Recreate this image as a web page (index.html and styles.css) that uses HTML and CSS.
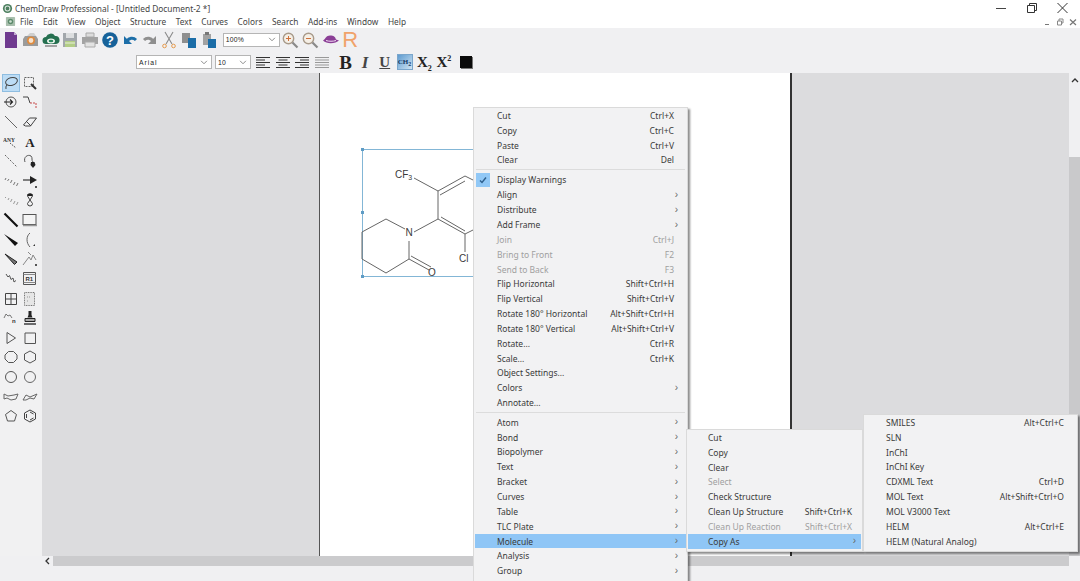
FILE: index.html
```html
<!DOCTYPE html>
<html lang="en">
<head>
<meta charset="utf-8">
<title>ChemDraw Professional</title>
<link rel="stylesheet" href="styles.css">
</head>
<body>
<div class="app">
  <header class="titlebar">
    <svg class="appicon" viewBox="0 0 12 12"><circle cx="6" cy="6" r="5" fill="#4d7f5f"/><circle cx="6" cy="6" r="2.600" fill="none" stroke="#dfe9e2" stroke-width="1.100"/></svg>
    <span class="title">ChemDraw Professional - [Untitled Document-2 *]</span>
    <div class="winbtns">
      <svg class="wb" viewBox="0 0 30 14"><path d="M10 7.500h10" stroke="#444"/></svg>
      <svg class="wb" viewBox="0 0 30 14"><path d="M10.500 4.500h7v7h-7zM12.500 4.500v-2h7v7h-2" fill="none" stroke="#333"/></svg>
      <svg class="wb" viewBox="0 0 30 14"><path d="M9.500 2l10 10M19.500 2l-10 10" stroke="#333"/></svg>
    </div>
  </header>
  <nav class="menubar">
    <svg class="docicon" viewBox="0 0 12 12"><rect x="1" y="1" width="10" height="10" rx="1" fill="#a9bfae"/><circle cx="6" cy="6" r="3" fill="#5c8a6b"/><circle cx="6" cy="6" r="1.400" fill="#cfe0d3"/></svg>
    <span class="mi">File</span><span class="mi">Edit</span><span class="mi">View</span><span class="mi">Object</span><span class="mi">Structure</span><span class="mi">Text</span><span class="mi">Curves</span><span class="mi">Colors</span><span class="mi">Search</span><span class="mi">Add-ins</span><span class="mi">Window</span><span class="mi">Help</span>
    <div class="mdibtns">
      <svg class="mb" viewBox="0 0 10 10"><path d="M3 7.500h4" stroke="#777"/></svg>
      <svg class="mb" viewBox="0 0 10 10"><path d="M2.500 4h4v4h-4zM4 4V2h4v4H6.500" fill="none" stroke="#888"/></svg>
      <svg class="mb" viewBox="0 0 10 10"><path d="M2 2.500l6 5.500M8 2.500L2 8" stroke="#777" stroke-width="1.200"/></svg>
    </div>
  </nav>
  <section class="toolbars">
    <div class="tb-row">
      <svg class="tb" viewBox="0 0 18 18"><path d="M3 1h9l3 3v13H3z" fill="#6f3a8f"/><path d="M12 1l3 3h-3z" fill="#c3abd1"/></svg>
      <svg class="tb" viewBox="0 0 18 18"><path d="M1 8l2-3h11l2 3v7H1z" fill="#9b9b9b"/><path d="M5 5l3-3h4l2 3z" fill="#cfcfcf"/><circle cx="9" cy="9.500" r="3.200" fill="#f6e3cf" stroke="#e08a3c" stroke-width="1.600"/></svg>
      <svg class="tb" viewBox="0 0 18 18"><path d="M4 13a3.500 3.500 0 0 1 0-7 5 5 0 0 1 9-1 4 4 0 0 1 1 8z" fill="#256f50"/><ellipse cx="9" cy="10" rx="4" ry="2.500" fill="#eef5f0"/><ellipse cx="9" cy="10" rx="2.400" ry="1.300" fill="#2c8a5f"/><path d="M3 15h12" stroke="#888" stroke-width="1.500"/></svg>
      <svg class="tb" viewBox="0 0 18 18"><path d="M2 2h14v14H2z" fill="#a2a7ab"/><path d="M5 2h8v5H5z" fill="#dcdedf"/><path d="M4 10h10v6H4z" fill="#b2cd86"/><path d="M4 12h10" stroke="#e8efd9"/></svg>
      <svg class="tb" viewBox="0 0 18 18"><path d="M5 2h8v4H5z" fill="#ddd" stroke="#aaa"/><path d="M1 6h16v7H1z" fill="#a3a3a3"/><path d="M4 11h10v5H4z" fill="#e2e2e2" stroke="#aaa"/></svg>
      <svg class="tb" viewBox="0 0 18 18"><circle cx="9" cy="9" r="7.800" fill="#17629a"/><text x="9" y="13.500" class="qmark">?</text></svg>
      <svg class="tb" viewBox="0 0 18 18"><path d="M3 5v8h8z" fill="#1c6ea8"/><path d="M6 10c2-3 6-4 9-1" fill="none" stroke="#1c6ea8" stroke-width="3"/></svg>
      <svg class="tb" viewBox="0 0 18 18"><path d="M15 5v8H7z" fill="#8f8f8f"/><path d="M12 10c-2-3-6-4-9-1" fill="none" stroke="#8f8f8f" stroke-width="3"/></svg>
      <svg class="tb" viewBox="0 0 18 18"><path d="M5 1l7 12M13 1L6 13" stroke="#8b8b8b" stroke-width="1.100" fill="none"/><circle cx="4.500" cy="15" r="1.800" fill="none" stroke="#e59a4d"/><circle cx="13.500" cy="15" r="1.800" fill="none" stroke="#e59a4d"/></svg>
      <svg class="tb" viewBox="0 0 18 18"><path d="M2 2h8v10H2z" fill="#8f8f8f"/><path d="M8 7h8v10H8z" fill="#1c6ea8"/></svg>
      <svg class="tb" viewBox="0 0 18 18"><path d="M3 3h8v11H3z" fill="#a2a2a2"/><path d="M5 1h4v3H5z" fill="#777"/><path d="M8 8h8v9H8z" fill="#1c6ea8"/></svg>
      <div class="combo zoomcombo"><span>100%</span><svg class="caret" viewBox="0 0 9 6"><path d="M1 1l3.500 3.500L8 1" fill="none" stroke="#777"/></svg></div>
      <svg class="tb" viewBox="0 0 18 18"><circle cx="7.500" cy="7.500" r="5.200" fill="#f5efe6" stroke="#a89a8a" stroke-width="1.400"/><path d="M11.500 11.500l5 5" stroke="#8a8a8a" stroke-width="2.200"/><path d="M5 7.500h5M7.500 5v5" stroke="#d0703a"/></svg>
      <svg class="tb" viewBox="0 0 18 18"><circle cx="7.500" cy="7.500" r="5.200" fill="#f5efe6" stroke="#a89a8a" stroke-width="1.400"/><path d="M11.500 11.500l5 5" stroke="#8a8a8a" stroke-width="2.200"/><path d="M5 7.500h5" stroke="#d0703a"/></svg>
      <svg class="tb hat" viewBox="0 0 18 18"><path d="M1 9.500c3-2 3-5 7-5s5 1 6 4l3 1c-3 3-12 4-16 0z" fill="#8b3f96"/><path d="M4 9.500c3 1 7 1 10 0" stroke="#efd9f2" fill="none"/></svg>
      <span class="rlogo">R</span>
    </div>
    <div class="tb-row row2">
      <div class="combo fontcombo"><span>Arial</span><svg class="caret" viewBox="0 0 9 6"><path d="M1 1l3.500 3.500L8 1" fill="none" stroke="#777"/></svg></div>
      <div class="combo sizecombo"><span>10</span><svg class="caret" viewBox="0 0 9 6"><path d="M1 1l3.500 3.500L8 1" fill="none" stroke="#777"/></svg></div>
      <svg class="tb al" viewBox="0 0 16 14"><path d="M1 2.500h14M1 5h9M1 7.500h14M1 10h9M1 12.500h14" stroke="#333"/></svg>
      <svg class="tb al" viewBox="0 0 16 14"><path d="M1 2.500h14M3.500 5h9M1 7.500h14M3.500 10h9M1 12.500h14" stroke="#333"/></svg>
      <svg class="tb al" viewBox="0 0 16 14"><path d="M1 2.500h14M6 5h9M1 7.500h14M6 10h9M1 12.500h14" stroke="#333"/></svg>
      <svg class="tb al" viewBox="0 0 16 14"><path d="M1 2.500h14M1 5h14M1 7.500h14M1 10h14M1 12.500h14" stroke="#999"/></svg>
      <span class="fmt bold">B</span>
      <span class="fmt ital">I</span>
      <span class="fmt under">U</span>
      <span class="fmt chem"><span>CH<sub>2</sub></span></span>
      <span class="fmt sx"><span>X<sub>2</sub></span></span>
      <span class="fmt sx"><span>X<sup>2</sup></span></span>
      <span class="swatch"></span>
    </div>
  </section>
  <main class="workspace">
    <aside class="palette">
      <svg class="ic sel" viewBox="0 0 16 16"><ellipse cx="8.500" cy="6.500" rx="6" ry="3.800" transform="rotate(-15 8.500 6.500)" fill="none" stroke="#444"/><path d="M4 10c-1.500 1-1 3-1 4" fill="none" stroke="#444"/></svg>
      <svg class="ic" viewBox="0 0 16 16"><path d="M2.500 2.500h9v9h-9z" fill="none" stroke="#666" stroke-dasharray="2 1"/><path d="M9 9l5 5" stroke="#333" stroke-width="2"/></svg>
      <svg class="ic" viewBox="0 0 16 16"><circle cx="8" cy="8" r="5" fill="none" stroke="#555"/><path d="M1 8h8M7 5.500L9.500 8 7 10.500" fill="none" stroke="#222" stroke-width="1.100"/></svg>
      <svg class="ic" viewBox="0 0 16 16"><path d="M1 3h5l2 6" fill="none" stroke="#444"/><path d="M8 9h6v5" fill="none" stroke="#c84a4a" stroke-dasharray="2 1"/></svg>
      <svg class="ic" viewBox="0 0 16 16"><path d="M2 2l12 12" stroke="#666"/></svg>
      <svg class="ic" viewBox="0 0 16 16"><path d="M1.500 11l6-7h7l-6 8h-5z" fill="none" stroke="#444"/><path d="M5 8l4 4" stroke="#444"/></svg>
      <svg class="ic" viewBox="0 0 16 16"><text x="0" y="8" class="anytxt">ANY</text><path d="M7 9l6 5" stroke="#555" stroke-dasharray="1.500 1"/></svg>
      <svg class="ic" viewBox="0 0 16 16"><text x="8" y="13" class="atxt">A</text></svg>
      <svg class="ic" viewBox="0 0 16 16"><path d="M2 2l12 12" stroke="#666" stroke-dasharray="2 1.500"/></svg>
      <svg class="ic" viewBox="0 0 16 16"><path d="M3 9c-2-5 3-8 6-6 2 2 0 4 2 6" fill="none" stroke="#555"/><path d="M9 9h3.500l1 3-2.500 3-2.500-3z" fill="#222"/></svg>
      <svg class="ic" viewBox="0 0 16 16"><path d="M3 5l-1 2M6 6L4.500 8M9 7l-1.500 3M12 9l-1.500 3M15 10l-1.500 3" stroke="#777"/></svg>
      <svg class="ic" viewBox="0 0 16 16"><path d="M1 7h8" stroke="#222" stroke-width="1.100"/><path d="M8 3l7 4-7 4z" fill="#222"/><path d="M13 13h2v2h-2z" fill="#555"/></svg>
      <svg class="ic" viewBox="0 0 16 16"><path d="M3 5l-1 1M6 6L5 8M9 7l-1.500 3M12 9l-1.500 3M15 10l-1.500 3" stroke="#999"/></svg>
      <svg class="ic" viewBox="0 0 16 16"><path d="M8 8L5.500 4a2.500 2.500 0 1 1 5 0zM8 8l-2.500 3.500a2.500 2.500 0 1 0 5 0z" fill="none" stroke="#444"/><path d="M5.500 3h5" stroke="#222" stroke-width="2"/></svg>
      <svg class="ic" viewBox="0 0 16 16"><path d="M1.500 1.500l13 13" stroke="#111" stroke-width="2.100"/></svg>
      <svg class="ic" viewBox="0 0 16 16"><rect x="1" y="2.500" width="13" height="10" fill="#f4f4f4" stroke="#555"/><path d="M1 13.500h14" stroke="#999" stroke-width="1.500"/></svg>
      <svg class="ic" viewBox="0 0 16 16"><path d="M1 2l14 9-3 3z" fill="#111"/></svg>
      <svg class="ic" viewBox="0 0 16 16"><path d="M8 1c-4 3-4 10 0 14" fill="none" stroke="#666"/><path d="M13 12v2h-2z" fill="#333"/></svg>
      <svg class="ic" viewBox="0 0 16 16"><path d="M2 3l12 8-2.500 2.500z" fill="#777" stroke="#222"/></svg>
      <svg class="ic" viewBox="0 0 16 16"><path d="M1 14L7 6l2 3 2-5 3 5" fill="none" stroke="#888"/><path d="M6 1l3 3" stroke="#888"/><path d="M13 13h2v2h-2z" fill="#555"/></svg>
      <svg class="ic" viewBox="0 0 16 16"><path d="M3 3l2 3 1.500-1.500 1.500 4 2-1.500 1 4 2-1.500" fill="none" stroke="#555"/></svg>
      <svg class="ic" viewBox="0 0 16 16"><path d="M1.500 1.500h12v12h-12z" fill="none" stroke="#555"/><path d="M1.500 3.500h12M1.500 11.500h12" stroke="#888"/><text x="3.500" y="9.500" class="rtxt">R1</text></svg>
      <svg class="ic" viewBox="0 0 16 16"><path d="M2.500 2.500h11v11h-11zM8 2.500v11M2.500 8h11" fill="none" stroke="#444"/></svg>
      <svg class="ic" viewBox="0 0 16 16"><path d="M2.500 1.500h10v13h-10z" fill="#e6e6e6" stroke="#777" stroke-dasharray="1 .7"/><path d="M5 6h4M5 10h2" stroke="#999" stroke-dasharray="1 1"/></svg>
      <svg class="ic" viewBox="0 0 16 16"><path d="M1 8l2-4 2 2 2-1 2 3" fill="none" stroke="#777"/><text x="9" y="13" class="rtxt">n</text></svg>
      <svg class="ic" viewBox="0 0 16 16"><path d="M6.500 1h3v4l1 2.500h-5l1-2.500z" fill="#222"/><path d="M3 8.500h10v3H3z" fill="#aaa" stroke="#222"/><path d="M2 14h12" stroke="#222" stroke-width="1.300"/></svg>
      <svg class="ic" viewBox="0 0 16 16"><path d="M4 2.500L12.500 8 4 13.500z" fill="none" stroke="#555"/></svg>
      <svg class="ic" viewBox="0 0 16 16"><path d="M3 3h10.500v10.500H3z" fill="none" stroke="#555"/></svg>
      <svg class="ic" viewBox="0 0 16 16"><path d="M5.500 2.500h5l3.500 3.500v4l-3.500 3.500h-5L2 10V6z" fill="none" stroke="#555"/></svg>
      <svg class="ic" viewBox="0 0 16 16"><path d="M8 2l5.500 3v6L8 14l-5.500-3V5z" fill="none" stroke="#555"/></svg>
      <svg class="ic" viewBox="0 0 16 16"><circle cx="8" cy="8" r="5.500" fill="none" stroke="#555"/></svg>
      <svg class="ic" viewBox="0 0 16 16"><circle cx="8" cy="8" r="5.500" fill="none" stroke="#666"/></svg>
      <svg class="ic" viewBox="0 0 16 16"><path d="M1 5l4 2 6-1 4-1-2 5-5 1-4-2-3 1z" fill="none" stroke="#666"/></svg>
      <svg class="ic" viewBox="0 0 16 16"><path d="M1 11l3-5 4 2 7-3-3 5-4-1-4 2z" fill="none" stroke="#666"/></svg>
      <svg class="ic" viewBox="0 0 16 16"><path d="M8 2.500l5.500 4-2 6.500h-7l-2-6.500z" fill="none" stroke="#555"/></svg>
      <svg class="ic" viewBox="0 0 16 16"><path d="M8 2l5.500 3v6L8 14l-5.500-3V5z" fill="none" stroke="#444"/><path d="M4.500 6v4M8 12l3.500-2M8 4l3.500 2" stroke="#444"/></svg>
    </aside>
    <div class="canvas">
      <div class="sheet">
        <svg class="molecule" viewBox="0 0 153 135" width="153" height="135">
          <rect x="41.500" y="3.500" width="130" height="127" fill="none" stroke="#83b6d6"/>
          <rect x="40" y="2" width="3" height="3" fill="#5f9cc5"/><rect x="40" y="65" width="3" height="3" fill="#5f9cc5"/><rect x="40" y="129" width="3" height="3" fill="#5f9cc5"/>
          <g fill="none" stroke="#666" stroke-width="1">
            <path d="M93 32l24 13M117 45l27-15M119 49l25-14M117 45v28M117 73l27 15M120 71l24 14M144 88v18M144 88l8-4M144 30l8 4M117 73l-24 13M84 83l-19-10M65 73l-24 13M41 86v27M41 113l24 14M65 127l23-14M88 113V95M88 113l20 11M90 110l20 11"/>
          </g>
          <text x="74" y="32" class="chemtxt">CF<tspan class="subs" dy="2">3</tspan></text>
          <text x="84.500" y="90" class="chemtxt">N</text>
          <text x="138" y="116" class="chemtxt">Cl</text>
          <text x="107" y="130" class="chemtxt">O</text>
        </svg>
      </div>
    </div>
    <div class="vscroll">
      <svg class="arrow" viewBox="0 0 8 6"><path d="M1 5l3-3 3 3" fill="none" stroke="#333" stroke-width="1.300"/></svg>
      <div class="vthumb"></div>
    </div>
  </main>
  <div class="hscroll">
    <div class="hgap"></div>
    <svg class="harrow" viewBox="0 0 6 8"><path d="M5 1L2 4l3 3" fill="none" stroke="#333" stroke-width="1.300"/></svg>
    <div class="hthumb"></div>
  </div>
  <footer class="status"></footer>

  <div class="menu menu-main">
    <div class="row"><span>Cut</span><span>Ctrl+X</span></div>
    <div class="row"><span>Copy</span><span>Ctrl+C</span></div>
    <div class="row"><span>Paste</span><span>Ctrl+V</span></div>
    <div class="row"><span>Clear</span><span>Del</span></div>
    <div class="sep"></div>
    <div class="row"><svg class="check" viewBox="0 0 14 14"><path d="M4 7.500l2 2 4-5" fill="none" stroke="#2d5f8c" stroke-width="1.400"/></svg><span>Display Warnings</span></div>
    <div class="row"><span>Align</span><i class="chev">›</i></div>
    <div class="row"><span>Distribute</span><i class="chev">›</i></div>
    <div class="row"><span>Add Frame</span><i class="chev">›</i></div>
    <div class="row off"><span>Join</span><span>Ctrl+J</span></div>
    <div class="row off"><span>Bring to Front</span><span>F2</span></div>
    <div class="row off"><span>Send to Back</span><span>F3</span></div>
    <div class="row"><span>Flip Horizontal</span><span>Shift+Ctrl+H</span></div>
    <div class="row"><span>Flip Vertical</span><span>Shift+Ctrl+V</span></div>
    <div class="row"><span>Rotate 180° Horizontal</span><span>Alt+Shift+Ctrl+H</span></div>
    <div class="row"><span>Rotate 180° Vertical</span><span>Alt+Shift+Ctrl+V</span></div>
    <div class="row"><span>Rotate...</span><span>Ctrl+R</span></div>
    <div class="row"><span>Scale...</span><span>Ctrl+K</span></div>
    <div class="row"><span>Object Settings...</span></div>
    <div class="row"><span>Colors</span><i class="chev">›</i></div>
    <div class="row"><span>Annotate...</span></div>
    <div class="sep sep2"></div>
    <div class="row"><span>Atom</span><i class="chev">›</i></div>
    <div class="row"><span>Bond</span><i class="chev">›</i></div>
    <div class="row"><span>Biopolymer</span><i class="chev">›</i></div>
    <div class="row"><span>Text</span><i class="chev">›</i></div>
    <div class="row"><span>Bracket</span><i class="chev">›</i></div>
    <div class="row"><span>Curves</span><i class="chev">›</i></div>
    <div class="row"><span>Table</span><i class="chev">›</i></div>
    <div class="row"><span>TLC Plate</span><i class="chev">›</i></div>
    <div class="row hot"><span>Molecule</span><i class="chev">›</i></div>
    <div class="row"><span>Analysis</span><i class="chev">›</i></div>
    <div class="row"><span>Group</span><i class="chev">›</i></div>
  </div>

  <div class="menu menu-sub">
    <div class="row"><span>Cut</span></div>
    <div class="row"><span>Copy</span></div>
    <div class="row"><span>Clear</span></div>
    <div class="row off"><span>Select</span></div>
    <div class="row"><span>Check Structure</span></div>
    <div class="row"><span>Clean Up Structure</span><span>Shift+Ctrl+K</span></div>
    <div class="row off"><span>Clean Up Reaction</span><span>Shift+Ctrl+X</span></div>
    <div class="row hot"><span>Copy As</span><i class="chev">›</i></div>
  </div>

  <div class="menu menu-copy">
    <div class="row"><span>SMILES</span><span>Alt+Ctrl+C</span></div>
    <div class="row"><span>SLN</span></div>
    <div class="row"><span>InChI</span></div>
    <div class="row"><span>InChI Key</span></div>
    <div class="row"><span>CDXML Text</span><span>Ctrl+D</span></div>
    <div class="row"><span>MOL Text</span><span>Alt+Shift+Ctrl+O</span></div>
    <div class="row"><span>MOL V3000 Text</span></div>
    <div class="row"><span>HELM</span><span>Alt+Ctrl+E</span></div>
    <div class="row"><span>HELM (Natural Analog)</span></div>
  </div>
</div>
</body>
</html>
```
FILE: styles.css
```css
* { box-sizing: border-box; }
html, body { margin: 0; padding: 0; height: 100%; background: #fff; overflow: hidden; }
.app {
  position: relative;
  width: 1080px;
  height: 581px;
  display: flex;
  flex-direction: column;
  overflow: hidden;
  font-family: "Noto Sans", "Liberation Sans", sans-serif;
  font-size: 8.5px;
  color: #3a3a3a;
}

.titlebar { height: 15px; display: flex; align-items: center; padding: 1px 0 0 2px; background: #fff; font-size: 8.350px; color: #444; }
.appicon { width: 11px; height: 11px; margin-right: 2px; }
.winbtns { margin-left: auto; display: flex; gap: 1px; padding-right: 2px; }
.wb { width: 30px; height: 14px; }

.menubar { height: 13px; display: flex; align-items: center; padding-left: 5px; background: #fff; color: #444; font-size: 8.300px; }
.docicon { width: 11px; height: 11px; margin-right: 4px; }
.mi { margin-right: 9.600px; white-space: nowrap; }
.mdibtns { margin-left: auto; display: flex; gap: 3px; padding-right: 2px; }
.mb { width: 10px; height: 10px; }

.toolbars { height: 45px; background: #f0f0f2; display: flex; flex-direction: column; }
.tb-row { height: 23px; display: flex; align-items: center; padding-left: 2px; }
.row2 { height: 22px; padding-left: 136px; }
.tb { width: 18px; height: 18px; margin-right: 1.800px; flex: none; }
.qmark { font: bold 13px "Liberation Sans", sans-serif; fill: #fff; text-anchor: middle; }
.combo {
  height: 14px;
  background: #fff;
  border: 1px solid #b5b5b5;
  display: flex;
  align-items: center;
  justify-content: space-between;
  padding: 0 3px 0 2px;
  font: 6.800px "Liberation Sans", sans-serif;
  letter-spacing: 0.200px;
  color: #222;
}
.caret { width: 8px; height: 5px; }
.zoomcombo { width: 57px; margin-left: 3px; margin-right: 1px; }
.hat { margin-left: 2px; margin-right: 2px; }
.rlogo { font: 22px/1 "Liberation Sans", sans-serif; color: #f0a36b; }
.fontcombo { width: 76px; margin-right: 3px; letter-spacing: 1px; }
.sizecombo { width: 36px; margin-right: 4px; }
.al { width: 16px; height: 14px; margin-right: 3.700px; }
.fmt { font-family: "Liberation Serif", serif; font-weight: bold; color: #222; display: flex; align-items: center; justify-content: center; width: 19.600px; height: 18px; line-height: 1; }
.bold { font-size: 19px; margin-left: 2px; }
.ital { font-size: 17px; font-style: italic; color: #444; }
.under { font-size: 15px; text-decoration: underline; color: #444; }
.chem { font-size: 7px; width: 16px; height: 16px; margin: 0 2px; background: linear-gradient(135deg, #5e9bd0, #cfe4f3); color: #143a66; border: 1px solid #7aa6cc; }
.fmt sub, .fmt sup { font-size: 8px; line-height: 0; }
.chem sub { font-size: 6px; }
.sx { font-size: 15px; }
.swatch { width: 12px; height: 12px; background: #0a0a0a; margin-left: 6px; box-shadow: 1px 1px 0 #777; }

.workspace { flex: 1; display: flex; min-height: 0; }
.palette {
  width: 42px;
  background: #f1f1f2;
  display: grid;
  grid-template-columns: 19.200px 19.200px;
  grid-auto-rows: 19.620px;
  padding-left: 1.400px;
  align-content: start;
  justify-items: center;
  align-items: center;
}
.ic { width: 16px; height: 16px; }
.sel { background: #bcdcf5; outline: 1px solid #8fbde0; }
.anytxt { font: bold 5.500px "Liberation Serif", serif; fill: #333; }
.atxt { font: bold 13px "Liberation Serif", serif; fill: #222; text-anchor: middle; }
.rtxt { font: bold 6px "Liberation Sans", sans-serif; fill: #333; }

.canvas { flex: 1; background: #dcdcde; padding-left: 277px; min-width: 0; }
.sheet { position: relative; width: 473px; height: 100%; background: #fff; border-left: 1px solid #555; border-right: 2px solid #333; }
.molecule { position: absolute; left: 1px; top: 73px; }
.chemtxt { font: 10px "Liberation Sans", sans-serif; fill: #3a3a3a; }
.subs { font-size: 7px; }

.vscroll { width: 11px; background: #f0f0f2; display: flex; flex-direction: column; align-items: center; padding-top: 4px; }
.arrow { width: 8px; height: 6px; flex: none; }
.vthumb { width: 100%; flex: 1; margin-top: 74px; background: #c9c9cb; }

.hscroll { height: 10px; display: flex; align-items: center; background: #f0f0f2; }
.hgap { width: 44px; flex: none; }
.harrow { width: 6px; height: 8px; margin-right: 3px; flex: none; }
.hthumb { height: 100%; flex: 1; background: #cbcbcd; margin-right: 11px; }
.status { height: 15px; background: #f0f0f2; }

.menu {
  position: absolute;
  background: #f2f2f3;
  border: 1px solid #dadada;
  box-shadow: 2px 2px 2px rgba(0, 0, 0, .45);
  color: #3a3a3a;
}
.menu-main { left: 473px; top: 107px; width: 215px; height: 480px; }
.menu-sub { left: 686px; top: 429px; width: 177px; padding-bottom: 2px; }
.menu-copy { left: 863px; top: 414px; width: 215px; padding-bottom: 2px; }
.row {
  position: relative;
  height: 14.850px;
  display: flex;
  align-items: center;
  justify-content: space-between;
  padding: 0 13px 0 23px;
  white-space: nowrap;
}
.menu-sub .row { padding: 0 10px 0 21px; }
.menu-copy .row { padding: 0 13px 0 22px; }
.off { color: #a0a0a0; }
.menu .hot { background: #8fc6f6; margin: 0 1px; }
.menu-main .hot { padding-left: 22px; padding-right: 12px; }
.menu-sub .hot { padding-left: 20px; padding-right: 9px; }
.chev { font: 10px/1 "Liberation Sans", sans-serif; color: #666; margin-right: -4px; }
.sep { height: 5.200px; position: relative; }
.sep::after { content: ""; position: absolute; left: 2px; right: 2px; top: 2px; border-top: 1px solid #dcdcdc; }
.sep2 { height: 4.800px; }
.check { position: absolute; left: 2px; top: 0; width: 14px; height: 14px; background: #91c8f6; }
```
